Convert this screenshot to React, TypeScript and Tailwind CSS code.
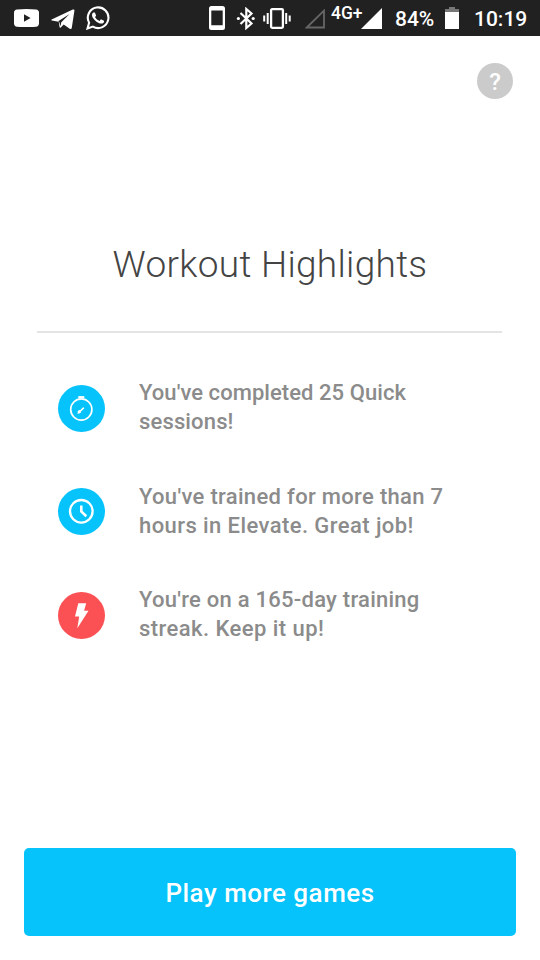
import type { ReactNode } from "react";

function StatusBar() {
  return (
    <header className="flex h-9 shrink-0 items-center bg-[#212121] text-white">
      <svg className="ml-3.5 h-[18px] w-[25px] shrink-0" viewBox="0 0 25 18">
        <path fill="#fff" d="M3 .4Q12.500-.3 22 .4Q24.800.6 25 3.500Q25.400 9 25 14.500Q24.800 17.400 22 17.700Q12.500 18.400 3 17.700Q.2 17.400 0 14.500Q-.4 9 0 3.500Q.2.6 3 .4Z" />
        <path fill="#212121" d="M10 5.200v7.600L16.600 9z" />
      </svg>
      <svg className="ml-3 mt-0.5 h-[21px] w-6 shrink-0" viewBox="0 0 24 21">
        <path fill="#fff" d="M.6 10.600L21.800.6Q23.700-.1 23.400 1.800L20.800 18.800Q20.400 20.700 18.700 19.700L12.700 15.600L9.700 18.600Q8.800 19.300 8.600 18L7.700 12.800L.8 11.400Q-.1 11 .6 10.600Z" />
        <path fill="#212121" d="M7.200 12.200L18.600 5L10.300 13.300L9.500 17.300L8.200 13z" />
      </svg>
      <svg className="ml-[11px] h-6 w-6 shrink-0" viewBox="0 0 24 24">
        <path fill="#fff" d="M17.472 14.382c-.297-.149-1.758-.867-2.030-.967-.273-.099-.471-.148-.670.150-.197.297-.767.966-.940 1.164-.173.199-.347.223-.644.075-.297-.150-1.255-.463-2.390-1.475-.883-.788-1.480-1.761-1.653-2.059-.173-.297-.018-.458.130-.606.134-.133.298-.347.446-.520.149-.174.198-.298.298-.497.099-.198.050-.371-.025-.520-.075-.149-.669-1.612-.916-2.207-.242-.579-.487-.500-.669-.510-.173-.008-.371-.010-.570-.010-.198 0-.520.074-.792.372-.272.297-1.040 1.016-1.040 2.479 0 1.462 1.065 2.875 1.213 3.074.149.198 2.096 3.200 5.077 4.487.709.306 1.262.489 1.694.625.712.227 1.360.195 1.871.118.571-.085 1.758-.719 2.006-1.413.248-.694.248-1.289.173-1.413-.074-.124-.272-.198-.570-.347" />
        <path fill="none" stroke="#fff" strokeWidth="2.100" d="M1.500 22.500l1.600-5.800a10.300 10.300 0 1 1 3.800 3.900z" />
      </svg>
      <svg className="ml-[99px] h-6 w-4 shrink-0" viewBox="0 0 16 24">
        <path fill="#fff" fillRule="evenodd" d="M2.500 0h11Q16 0 16 2.500v19Q16 24 13.500 24h-11Q0 24 0 21.500v-19Q0 0 2.500 0zM2.300 4.500v14.800h11.400V4.500z" />
      </svg>
      <svg className="ml-[11px] h-[23px] w-5 shrink-0" viewBox="0 0 20 23">
        <path fill="none" stroke="#fff" strokeWidth="2.200" d="M4.500 6l11 10.500-5.200 4.500V2l5.200 4.500-11 10.500" />
        <circle cx="2.400" cy="11.500" r="1.600" fill="#fff" />
        <circle cx="17.200" cy="11.500" r="1.600" fill="#fff" />
      </svg>
      <svg className="ml-[7px] h-[21px] w-7 shrink-0" viewBox="0 0 28 21">
        <path fill="none" stroke="#fff" strokeWidth="2" d="M1.200 7.500v6M4.700 5v11M23.200 5v11M26.700 7.500v6" />
        <rect x="8.100" y="1.200" width="11.800" height="18.600" rx="1" fill="none" stroke="#fff" strokeWidth="2.300" />
      </svg>
      <svg className="ml-3.5 mt-0.5 h-[21px] w-[21px] shrink-0" viewBox="0 0 21 21">
        <path fill="none" stroke="#666" strokeWidth="1.800" d="M1.800 18.500L19 1.600V18.500z" />
      </svg>
      <span className="-mt-2.5 ml-[5px] w-8 whitespace-nowrap text-[17.500px] font-medium leading-5">4G+</span>
      <svg className="-ml-0.5 h-[21px] w-[21px] shrink-0" viewBox="0 0 21 21">
        <path fill="#fff" d="M0 21L21 0V21z" />
      </svg>
      <span className="ml-[13px] mt-[3px] w-10 whitespace-nowrap text-[21px] font-medium">84%</span>
      <svg className="ml-[10px] h-[22px] w-3.5 shrink-0" viewBox="0 0 14 22">
        <path fill="#777" d="M4 0h6v2h4v4H0V2h4z" />
        <path fill="#fff" d="M0 5h14v17H0z" />
      </svg>
      <span className="ml-[15px] mt-[3px] whitespace-nowrap text-[21px] font-medium">10:19</span>
    </header>
  );
}

function StopwatchIcon() {
  return (
    <svg className="size-[47px]" viewBox="0 0 47 47" fill="none" stroke="#fff">
      <circle cx="23.300" cy="24.500" r="10.600" strokeWidth="1.700" />
      <path strokeWidth="2.200" d="M20.300 12.200h6" />
      <path strokeWidth="1.600" d="M20.200 28l5.200-4.800" strokeLinecap="round" />
      <circle cx="21.400" cy="26.700" r="1.200" fill="#fff" />
    </svg>
  );
}

function ClockIcon() {
  return (
    <svg className="size-[47px]" viewBox="0 0 47 47" fill="none" stroke="#fff">
      <circle cx="23.300" cy="23.300" r="11.300" strokeWidth="2.300" />
      <path strokeWidth="2.600" d="M23.300 17.500v6l5 4.700" />
    </svg>
  );
}

function BoltIcon() {
  return (
    <svg className="size-[47px]" viewBox="0 0 47 47" fill="#fff">
      <path d="M20.300 11.200h7.900l-2.100 7.600h4.400L19.300 36.300l1.900-11.800h-4.200z" />
    </svg>
  );
}

function Highlight({ icon, color, children }: { icon: ReactNode; color: string; children: ReactNode }) {
  return (
    <li className="flex h-[58px] items-center">
      <span className={`mt-0.5 size-[47px] shrink-0 rounded-full ${color}`}>{icon}</span>
      <p className="ml-[34px] whitespace-nowrap text-[22px] font-medium leading-[29px] text-[#8b8b8b]">{children}</p>
    </li>
  );
}

export default function App() {
  return (
    <div className="flex h-[960px] w-[540px] flex-col overflow-hidden bg-white font-['Roboto',sans-serif]">
      <StatusBar />
      <div className="flex h-[63px] items-end justify-end pr-[27px]">
        <button className="flex size-9 items-center justify-center rounded-full bg-[#cbcbcb] pt-0.5 text-[24px] font-medium text-white">?</button>
      </div>
      <main className="flex flex-1 flex-col">
        <h1 className="mt-[143px] whitespace-nowrap text-center text-[37px] font-light leading-[46px] tracking-[0.300px] text-[#444]">
          Workout Highlights
        </h1>
        <hr className="ml-[37px] mr-[38px] mt-[43px] border-0 border-t-2 border-[#e4e4e4]" />
        <ul className="mt-[45px] flex flex-col gap-[45.700px] pl-[58px]">
          <Highlight icon={<StopwatchIcon />} color="bg-[#06c3fc]">
            <span className="block tracking-[0.060px]">You've completed 25 Quick</span>
            <span className="block tracking-[0.150px]">sessions!</span>
          </Highlight>
          <Highlight icon={<ClockIcon />} color="bg-[#06c3fc]">
            <span className="block tracking-[0.320px]">You've trained for more than 7</span>
            <span className="block tracking-[0.420px]">hours in Elevate. Great job!</span>
          </Highlight>
          <Highlight icon={<BoltIcon />} color="bg-[#fc5154]">
            <span className="block tracking-[0.250px]">You're on a 165-day training</span>
            <span className="block tracking-[0.450px]">streak. Keep it up!</span>
          </Highlight>
        </ul>
      </main>
      <button className="mx-6 mb-6 flex h-[88px] shrink-0 items-center justify-center rounded-[5px] bg-[#06c3fc] pt-0.5 text-[26px] font-medium tracking-[0.500px] text-white">
        Play more games
      </button>
    </div>
  );
}
